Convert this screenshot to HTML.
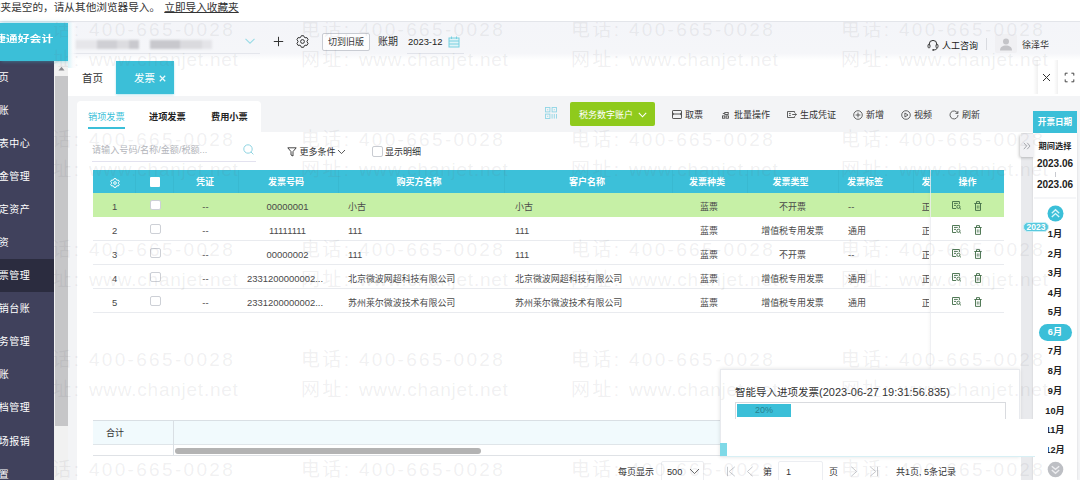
<!DOCTYPE html>
<html lang="zh-CN">
<head>
<meta charset="utf-8">
<title>发票</title>
<style>
*{box-sizing:border-box;margin:0;padding:0}
html,body{width:1080px;height:480px;overflow:hidden;background:#fff}
body{position:relative;font-family:"Liberation Sans","Noto Sans CJK SC",sans-serif;font-size:9px;color:#333;line-height:1}
.a{position:absolute;white-space:nowrap}
.wm{position:absolute;left:0;top:0;width:1080px;height:480px;overflow:hidden;pointer-events:none;z-index:50}
.wm span{position:absolute;white-space:nowrap;font-size:19px;letter-spacing:2.33px;color:rgba(110,110,120,0.10);line-height:22px}
.wm i{font-style:normal;letter-spacing:0.76px}
/* top strip */
#strip{left:0;top:0;width:1080px;height:22px;background:#fff;border-bottom:1px solid #e3e5ea}
/* header */
#hdr{left:0;top:22px;width:1080px;height:38px;background:linear-gradient(#f4f5f9 0%,#f5f6f9 82%,#fff 100%)}
#logo{left:0;top:23px;width:68px;height:38px;background:#3bbfd8;box-shadow:1px 0 4px rgba(59,191,216,.55);z-index:3;color:#fff;font-weight:bold;font-size:10px}
/* sidebar */
#side{left:0;top:61px;width:54px;height:419px;background:#40415c}
#side .it{position:absolute;left:0;width:54px;height:33px;color:#fff;font-size:10px;line-height:33px;white-space:nowrap}
#sscroll{left:54px;top:60px;width:14px;height:420px;background:#f1f1f1}
#sthumb{left:55px;top:76px;width:13px;height:350px;background:#c6c6c8}
/* tabs bar */
#tabbar{left:68px;top:60px;width:1012px;height:36px;background:#fff}
#page{left:68px;top:96px;width:1012px;height:384px;background:#f3f4f6}
#main{left:77px;top:132px;width:956px;height:348px;background:#fff}
#tcard{left:77px;top:101px;width:184px;height:34px;background:#fff;border-radius:4px 4px 0 0}
.th{position:absolute;top:170.5px;height:23px;line-height:23px;color:#fff;font-weight:bold;font-size:9px;text-align:center;white-space:nowrap}
.row{position:absolute;left:93px;width:911px;height:24px;border-bottom:1px solid #e6e8ec}
.c{position:absolute;white-space:nowrap;font-size:8.95px;color:#4a4a4a;line-height:24px;height:24px}
.n{font-size:9.45px}
.cb{position:absolute;width:10.5px;height:10.5px;border:1px solid #cdd0d6;border-radius:2px;background:#fff}
.mon{position:absolute;left:1033px;width:44px;text-align:center;font-size:9.2px;font-weight:bold;color:#222;line-height:12px}
</style>
</head>
<body>
<!-- top browser strip -->
<div class="a" id="strip"></div>
<div class="a" style="left:-10.15px;top:0px;font-size:10.65px;line-height:14px;color:#333">藏夹是空的，请从其他浏览器导入。 <span style="text-decoration:underline;text-underline-offset:1px;text-decoration-thickness:1px;margin-left:1.2px">立即导入收藏夹</span></div>

<!-- header -->
<div class="a" id="hdr"></div>
<div class="a" id="logo"><span class="a" style="left:-6px;top:11px;font-size:8.6px;line-height:10px;transform:scaleX(1.38);transform-origin:0 0">捷通好会计</span></div>

<!-- sidebar -->
<div class="a" id="side">
  <div class="it" style="top:-0.2px"><span style="margin-left:-1.2px;letter-spacing:.45px">页</span></div>
  <div class="it" style="top:32.9px"><span style="margin-left:-1.2px;letter-spacing:.45px">账</span></div>
  <div class="it" style="top:65.9px"><span style="margin-left:-1.2px;letter-spacing:.45px">表中心</span></div>
  <div class="it" style="top:99.0px"><span style="margin-left:-1.2px;letter-spacing:.45px">金管理</span></div>
  <div class="it" style="top:132.0px"><span style="margin-left:-1.2px;letter-spacing:.45px">定资产</span></div>
  <div class="it" style="top:165.1px"><span style="margin-left:-1.2px;letter-spacing:.45px">资</span></div>
  <div class="it" style="top:198.2px;background:#2b2c3f"><span style="margin-left:-1.2px;letter-spacing:.45px">票管理</span></div>
  <div class="it" style="top:231.2px"><span style="margin-left:-1.2px;letter-spacing:.45px">销台账</span></div>
  <div class="it" style="top:264.3px"><span style="margin-left:-1.2px;letter-spacing:.45px">务管理</span></div>
  <div class="it" style="top:297.3px"><span style="margin-left:-1.2px;letter-spacing:.45px">账</span></div>
  <div class="it" style="top:330.4px"><span style="margin-left:-1.2px;letter-spacing:.45px">档管理</span></div>
  <div class="it" style="top:363.5px"><span style="margin-left:-1.2px;letter-spacing:.45px">场报销</span></div>
  <div class="it" style="top:396.5px"><span style="margin-left:-1.2px;letter-spacing:.45px">置</span></div>
</div>
<div class="a" id="sscroll"></div>
<div class="a" id="sthumb"></div>
<svg class="a" style="left:58px;top:66px" width="7" height="5" viewBox="0 0 7 5"><path d="M0.5 4.5L3.5 0.8L6.5 4.5Z" fill="#8a8a8e"/></svg>

<!-- tab bar -->
<div class="a" id="tabbar"></div>
<div class="a" id="page"></div>
<div class="a" id="tcard"></div>
<div class="a" id="main"></div>

<!-- header contents -->
<div class="a" style="left:68px;top:53px;width:192px;height:1px;background:#e4e6ec"></div>
<div class="a" style="left:75px;top:39px;width:140px;height:12px;filter:blur(1.2px)">
  <div class="a" style="left:0;top:1px;width:22px;height:9px;background:#e6e6ea"></div>
  <div class="a" style="left:22px;top:1px;width:20px;height:9px;background:#cfcfd4"></div>
  <div class="a" style="left:42px;top:1px;width:12px;height:9px;background:#dcdce0"></div>
  <div class="a" style="left:54px;top:1px;width:10px;height:9px;background:#c9c9ce"></div>
  <div class="a" style="left:75px;top:1px;width:30px;height:9px;background:#c8c8cd"></div>
  <div class="a" style="left:105px;top:1px;width:22px;height:9px;background:#dadade"></div>
  <div class="a" style="left:127px;top:1px;width:10px;height:9px;background:#e4e4e8"></div>
</div>
<svg class="a" style="left:244px;top:37px" width="12" height="8" viewBox="0 0 12 8"><path d="M1.5 1.8 L6 6.2 L10.5 1.8" fill="none" stroke="#9adbe6" stroke-width="1.1"/></svg>
<svg class="a" style="left:273px;top:36px" width="11" height="11" viewBox="0 0 11 11"><path d="M5.5 0.8V10.2M0.8 5.5H10.2" fill="none" stroke="#333" stroke-width="1"/></svg>
<svg class="a" style="left:296px;top:35px" width="13" height="13" viewBox="0 0 13 13"><path d="M10.99 6.83 L12.09 8.40 L10.94 10.39 L9.03 10.22 L8.46 10.55 L7.65 12.29 L5.35 12.29 L4.54 10.55 L3.97 10.22 L2.06 10.39 L0.91 8.40 L2.01 6.83 L2.01 6.17 L0.91 4.60 L2.06 2.61 L3.97 2.78 L4.54 2.45 L5.35 0.71 L7.65 0.71 L8.46 2.45 L9.03 2.78 L10.94 2.61 L12.09 4.60 L10.99 6.17Z" fill="none" stroke="#333" stroke-width="1" stroke-linejoin="round"/><circle cx="6.5" cy="6.5" r="1.9" fill="none" stroke="#333" stroke-width="1"/></svg>
<div class="a" style="left:322px;top:33px;width:48px;height:18px;border:1px solid #c9ccd3;border-radius:2px;background:#fdfdfe;text-align:center;font-size:9px;line-height:16px;color:#333">切到旧版</div>
<div class="a" style="left:378px;top:36px;font-size:10px;line-height:12px;color:#333">账期</div>
<div class="a" style="left:408px;top:36px;font-size:9.4px;line-height:12px;color:#222">2023-12</div>
<svg class="a" style="left:448px;top:36px" width="12" height="12" viewBox="0 0 12 12"><rect x="1" y="2" width="10" height="9" fill="#dff4f8" stroke="#79d0e0" stroke-width="1"/><path d="M1 5H11M1 8H11M3.5 0.5V3M8.5 0.5V3" stroke="#79d0e0" stroke-width="1" fill="none"/></svg>
<div class="a" style="left:407px;top:53px;width:57px;height:1px;background:#e1e3ea"></div>
<!-- header right -->
<svg class="a" style="left:927px;top:39px" width="12" height="12" viewBox="0 0 12 12"><path d="M2.2 6.5V5.2a3.8 3.8 0 0 1 7.6 0V6.5" fill="none" stroke="#333" stroke-width="1"/><rect x="1" y="5.4" width="2" height="3.4" rx="0.8" fill="none" stroke="#333" stroke-width="0.9"/><rect x="9" y="5.4" width="2" height="3.4" rx="0.8" fill="none" stroke="#333" stroke-width="0.9"/><path d="M10 8.8c0 1.6-1.4 2.1-3.2 2.1" fill="none" stroke="#333" stroke-width="0.9"/><circle cx="6.2" cy="10.9" r="0.9" fill="#333"/></svg>
<div class="a" style="left:942px;top:40px;font-size:9px;line-height:12px;color:#222">人工咨询</div>
<div class="a" style="left:986px;top:38px;width:1px;height:12px;background:#d9dbe0"></div>
<div class="a" style="left:995px;top:34px;width:22px;height:19px;background:#f0f0f3;border-radius:2px"></div>
<svg class="a" style="left:999px;top:38px" width="14" height="13" viewBox="0 0 14 13"><circle cx="7" cy="3.6" r="3" fill="#c4c4c8"/><path d="M1 12.5c0-3.6 2.6-5 6-5s6 1.4 6 5z" fill="#c4c4c8"/></svg>
<div class="a" style="left:1022px;top:39px;font-size:9px;line-height:12px;color:#333">徐泽华</div>

<!-- tab bar contents -->
<div class="a" style="left:82px;top:71px;font-size:10.5px;line-height:14px;color:#333">首页</div>
<div class="a" style="left:116px;top:61px;width:58px;height:33px;background:#3bbfd8;box-shadow:0 1px 2px rgba(60,190,215,.4)"></div>
<div class="a" style="left:134px;top:71px;font-size:10.5px;line-height:14px;color:#fff">发票</div>
<svg class="a" style="left:159px;top:75px" width="7" height="7" viewBox="0 0 7 7"><path d="M0.8 0.8L6.2 6.2M6.2 0.8L0.8 6.2" stroke="#eefafc" stroke-width="1.25" fill="none"/></svg>
<div class="a" style="left:1033px;top:60px;width:5px;height:34px;background:linear-gradient(90deg,rgba(0,0,0,0),rgba(0,0,0,.06))"></div>
<div class="a" style="left:1054px;top:60px;width:4px;height:34px;background:linear-gradient(90deg,rgba(0,0,0,0),rgba(0,0,0,.06))"></div>
<svg class="a" style="left:1042px;top:73px" width="9" height="9" viewBox="0 0 9 9"><path d="M1 1L8 8M8 1L1 8" stroke="#333" stroke-width="1" fill="none"/></svg>
<svg class="a" style="left:1064px;top:72px" width="11" height="11" viewBox="0 0 11 11"><path d="M1.2 3.6V1.2H3.6M7.4 1.2H9.8V3.6M9.8 7.4V9.8H7.4M3.6 9.8H1.2V7.4" stroke="#444" stroke-width="1" fill="none"/></svg>


<!-- sub tabs -->
<div class="a" style="left:88px;top:111px;font-size:9.2px;line-height:12px;color:#3bbfd8">销项发票</div>
<div class="a" style="left:88px;top:127px;width:37px;height:2px;background:#3bbfd8"></div>
<div class="a" style="left:149px;top:111px;font-size:9.2px;line-height:12px;color:#222;font-weight:bold">进项发票</div>
<div class="a" style="left:211px;top:111px;font-size:9.2px;line-height:12px;color:#222;font-weight:bold">费用小票</div>

<!-- toolbar -->
<svg class="a" style="left:545px;top:107px" width="12" height="12" viewBox="0 0 12 12" fill="none" stroke="#8fd5e5" stroke-width="0.9"><rect x="0.5" y="0.5" width="4.4" height="4.4"/><rect x="7.1" y="0.5" width="4.4" height="4.4"/><rect x="0.5" y="7.1" width="4.4" height="4.4"/><path d="M7.1 7V11.6M9.3 7V11.6M11.5 7V11.6"/><path d="M2.2 2.7H3.2M8.8 2.7H9.8M2.2 9.3H3.2" stroke-width="1.1"/></svg>
<div class="a" style="left:570px;top:102px;width:85px;height:23.5px;background:#8fca1c;border-radius:2px"></div>
<div class="a" style="left:579px;top:108.5px;font-size:9px;line-height:12px;color:#fff">税务数字账户</div>
<svg class="a" style="left:637.5px;top:112px" width="9" height="6" viewBox="0 0 9 6"><path d="M0.8 0.9L4.5 4.8L8.2 0.9" fill="none" stroke="#fff" stroke-width="1.1"/></svg>

<svg class="a" style="left:672px;top:110px" width="10" height="9" viewBox="0 0 10 9" fill="none" stroke="#444" stroke-width="0.9"><rect x="0.5" y="0.5" width="9" height="8" rx="0.6"/><path d="M0.5 2.8c1.4 0 1.4 2.4 0 2.4M9.5 2.8c-1.4 0-1.4 2.4 0 2.4M1.6 4H8.4" /></svg>
<div class="a" style="left:685px;top:109px;font-size:9px;line-height:12px;color:#333">取票</div>
<svg class="a" style="left:722px;top:111.5px" width="7" height="7" viewBox="0 0 7 7" fill="none" stroke="#444" stroke-width="0.85"><rect x="2.8" y="0.5" width="3.4" height="2"/><rect x="0.5" y="3.9" width="2.3" height="2.3"/><rect x="4.1" y="3.9" width="2.3" height="2.3"/><path d="M0.8 1.5H2.6"/></svg>
<div class="a" style="left:734px;top:109px;font-size:9px;line-height:12px;color:#333">批量操作</div>
<svg class="a" style="left:787px;top:111px" width="10" height="7" viewBox="0 0 10 7" fill="none" stroke="#444" stroke-width="0.85"><path d="M7.6 1.8V0.5H0.5V6.5H7.6V5.2"/><path d="M2 2.4H3.8M2 4.4H3.8M5.2 3.5H9.4M8.2 2.3L9.4 3.5L8.2 4.7"/></svg>
<div class="a" style="left:800px;top:109px;font-size:9px;line-height:12px;color:#333">生成凭证</div>
<svg class="a" style="left:853px;top:110px" width="10" height="10" viewBox="0 0 10 10" fill="none" stroke="#4a4a4a" stroke-width="0.85"><circle cx="5" cy="5" r="4.3"/><path d="M5 2.6V7.4M2.6 5H7.4"/></svg>
<div class="a" style="left:866px;top:109px;font-size:9px;line-height:12px;color:#333">新增</div>
<svg class="a" style="left:901px;top:110px" width="10" height="10" viewBox="0 0 10 10" fill="none" stroke="#4a4a4a" stroke-width="0.85"><circle cx="5" cy="5" r="4.3"/><path d="M3.9 3V7L7 5Z"/></svg>
<div class="a" style="left:914px;top:109px;font-size:9px;line-height:12px;color:#333">视频</div>
<svg class="a" style="left:949px;top:110px" width="10" height="10" viewBox="0 0 10 10" fill="none" stroke="#4a4a4a" stroke-width="0.85"><path d="M8.6 3.2A4 4 0 1 0 9 5"/><path d="M8.9 1V3.4H6.5" /></svg>
<div class="a" style="left:962px;top:109px;font-size:9px;line-height:12px;color:#333">刷新</div>

<!-- search row -->
<div class="a" style="left:92px;top:144px;font-size:9.1px;line-height:12px;color:#b3b5bb">请输入号码/名称/金额/税额...</div>
<svg class="a" style="left:243px;top:144px" width="11" height="11" viewBox="0 0 11 11" fill="none" stroke="#8fd4e2" stroke-width="1"><circle cx="5" cy="5" r="4.2"/><path d="M8 8L10.4 10.4"/></svg>
<div class="a" style="left:92px;top:161px;width:164px;height:1px;background:#e3e2ef"></div>
<svg class="a" style="left:287px;top:147px" width="10" height="10" viewBox="0 0 10 10" fill="none" stroke="#333" stroke-width="0.9"><path d="M0.8 0.8H9.2L6 4.6V9L4 8V4.6Z"/></svg>
<div class="a" style="left:299.5px;top:146px;font-size:9px;line-height:12px;color:#333">更多条件</div>
<svg class="a" style="left:337px;top:149px" width="9" height="6" viewBox="0 0 9 6"><path d="M1 1L4.5 4.6L8 1" fill="none" stroke="#444" stroke-width="0.9"/></svg>
<div class="cb" style="left:372px;top:146px;border-color:#c9ccd2"></div>
<div class="a" style="left:385px;top:146px;font-size:9px;line-height:12px;color:#333">显示明细</div>


<!-- table -->
<div class="a" style="left:93px;top:170px;width:911px;height:23px;background:#3cc0d9"></div>
<div class="a" style="left:135px;top:170px;width:1px;height:23px;background:#39b9d1"></div>
<div class="a" style="left:173px;top:170px;width:1px;height:23px;background:#39b9d1"></div>
<div class="a" style="left:238px;top:170px;width:1px;height:23px;background:#39b9d1"></div>
<div class="a" style="left:338px;top:170px;width:1px;height:23px;background:#39b9d1"></div>
<div class="a" style="left:504px;top:170px;width:1px;height:23px;background:#39b9d1"></div>
<div class="a" style="left:672px;top:170px;width:1px;height:23px;background:#39b9d1"></div>
<div class="a" style="left:747px;top:170px;width:1px;height:23px;background:#39b9d1"></div>
<div class="a" style="left:838px;top:170px;width:1px;height:23px;background:#39b9d1"></div>
<div class="a" style="left:913px;top:170px;width:1px;height:23px;background:#39b9d1"></div>
<svg class="a" style="left:109.5px;top:177.5px" width="10" height="10" viewBox="0 0 10 10" fill="none" stroke="#fff" stroke-width="1"><path d="M8.39 5.25 L9.26 6.45 L8.38 7.97 L6.91 7.81 L6.48 8.06 L5.88 9.41 L4.12 9.41 L3.52 8.06 L3.09 7.81 L1.62 7.97 L0.74 6.45 L1.61 5.25 L1.61 4.75 L0.74 3.55 L1.62 2.03 L3.09 2.19 L3.52 1.94 L4.12 0.59 L5.88 0.59 L6.48 1.94 L6.91 2.19 L8.38 2.03 L9.26 3.55 L8.39 4.75Z" stroke-linejoin="round"/><circle cx="5" cy="5" r="1.3"/></svg>
<div class="a" style="left:150px;top:177px;width:10px;height:10px;background:#fff;border-radius:1px"></div>
<div class="th" style="left:165px;width:80px">凭证</div>
<div class="th" style="left:246px;width:80px">发票号码</div>
<div class="th" style="left:379px;width:80px">购买方名称</div>
<div class="th" style="left:547px;width:80px">客户名称</div>
<div class="th" style="left:667px;width:80px">发票种类</div>
<div class="th" style="left:750.5px;width:80px">发票类型</div>
<div class="th" style="left:825px;width:80px">发票标签</div>
<div class="th" style="left:921.5px;width:9px;overflow:hidden;text-align:left">发票</div>
<div class="row" style="top:193px;background:#c6f0a6;border-bottom-color:#c6f0a6">
<span class="c n" style="left:-38.5px;width:120px;text-align:center;top:1.5px">1</span>
<span class="cb" style="left:57px;top:6.5px"></span>
<span class="c n" style="left:52.5px;width:120px;text-align:center;top:1.5px">--</span>
<span class="c n" style="left:134.5px;width:120px;text-align:center;top:1.5px">00000001</span>
<span class="c" style="left:255px;top:1.5px">小古</span>
<span class="c" style="left:422px;top:1.5px">小古</span>
<span class="c" style="left:556.0px;width:120px;text-align:center;top:1.5px">蓝票</span>
<span class="c" style="left:639.5px;width:120px;text-align:center;top:1.5px">不开票</span>
<span class="c n" style="left:755px;top:1.5px">--</span>
<span class="c" style="left:828.8px;width:7.7px;overflow:hidden;top:1.5px">正常</span>
</div>
<div class="row" style="top:217px;background:transparent;border-bottom-color:#e9ebef">
<span class="c n" style="left:-38.5px;width:120px;text-align:center;top:1.5px">2</span>
<span class="cb" style="left:57px;top:6.5px"></span>
<span class="c n" style="left:52.5px;width:120px;text-align:center;top:1.5px">--</span>
<span class="c n" style="left:134.5px;width:120px;text-align:center;top:1.5px">11111111</span>
<span class="c n" style="left:255px;top:1.5px">111</span>
<span class="c n" style="left:422px;top:1.5px">111</span>
<span class="c" style="left:556.0px;width:120px;text-align:center;top:1.5px">蓝票</span>
<span class="c" style="left:639.5px;width:120px;text-align:center;top:1.5px">增值税专用发票</span>
<span class="c" style="left:755px;top:1.5px">通用</span>
<span class="c" style="left:828.8px;width:7.7px;overflow:hidden;top:1.5px">正常</span>
</div>
<div class="row" style="top:241px;background:transparent;border-bottom-color:#e9ebef">
<span class="c n" style="left:-38.5px;width:120px;text-align:center;top:1.5px">3</span>
<span class="cb" style="left:57px;top:6.5px"></span>
<span class="c n" style="left:52.5px;width:120px;text-align:center;top:1.5px">--</span>
<span class="c n" style="left:134.5px;width:120px;text-align:center;top:1.5px">00000002</span>
<span class="c n" style="left:255px;top:1.5px">111</span>
<span class="c n" style="left:422px;top:1.5px">111</span>
<span class="c" style="left:556.0px;width:120px;text-align:center;top:1.5px">蓝票</span>
<span class="c" style="left:639.5px;width:120px;text-align:center;top:1.5px">不开票</span>
<span class="c n" style="left:755px;top:1.5px">--</span>
<span class="c" style="left:828.8px;width:7.7px;overflow:hidden;top:1.5px">正常</span>
</div>
<div class="row" style="top:265px;background:transparent;border-bottom-color:#e9ebef">
<span class="c n" style="left:-38.5px;width:120px;text-align:center;top:1.5px">4</span>
<span class="cb" style="left:57px;top:6.5px"></span>
<span class="c n" style="left:52.5px;width:120px;text-align:center;top:1.5px">--</span>
<span class="c n" style="left:132.0px;width:120px;text-align:center;top:1.5px">2331200000002...</span>
<span class="c" style="left:255px;top:1.5px">北京微波网超科技有限公司</span>
<span class="c" style="left:422px;top:1.5px">北京微波网超科技有限公司</span>
<span class="c" style="left:556.0px;width:120px;text-align:center;top:1.5px">蓝票</span>
<span class="c" style="left:639.5px;width:120px;text-align:center;top:1.5px">增值税专用发票</span>
<span class="c" style="left:755px;top:1.5px">通用</span>
<span class="c" style="left:828.8px;width:7.7px;overflow:hidden;top:1.5px">正常</span>
</div>
<div class="row" style="top:289px;background:transparent;border-bottom-color:#e9ebef">
<span class="c n" style="left:-38.5px;width:120px;text-align:center;top:1.5px">5</span>
<span class="cb" style="left:57px;top:6.5px"></span>
<span class="c n" style="left:52.5px;width:120px;text-align:center;top:1.5px">--</span>
<span class="c n" style="left:132.0px;width:120px;text-align:center;top:1.5px">2331200000002...</span>
<span class="c" style="left:255px;top:1.5px">苏州莱尔微波技术有限公司</span>
<span class="c" style="left:422px;top:1.5px">苏州莱尔微波技术有限公司</span>
<span class="c" style="left:556.0px;width:120px;text-align:center;top:1.5px">蓝票</span>
<span class="c" style="left:639.5px;width:120px;text-align:center;top:1.5px">增值税专用发票</span>
<span class="c" style="left:755px;top:1.5px">通用</span>
<span class="c" style="left:828.8px;width:7.7px;overflow:hidden;top:1.5px">正常</span>
</div>
<div class="a" style="left:927px;top:170px;width:4px;height:250px;background:linear-gradient(90deg,rgba(0,0,0,0),rgba(0,0,0,.035))"></div>
<div class="a" style="left:929.5px;top:170px;width:1.5px;height:199px;background:rgba(236,238,241,.8);z-index:2"></div>
<div class="a" style="left:931px;top:170px;width:73px;height:23px;background:#3cc0d9"></div>
<div class="th" style="left:931px;width:73px">操作</div>
<div class="a" style="left:931px;top:193px;width:73px;height:24px;background:#c6f0a6;border-bottom:1px solid #c6f0a6"><svg class="a" style="left:21px;top:8px" width="10" height="9" viewBox="0 0 10 9" fill="none" stroke="#3f6b45" stroke-width="0.9"><path d="M7.4 3.2V0.5H0.5V7.5H4.2"/><path d="M2 2.4H5.8M2 4.4H4"/><circle cx="6.4" cy="5.8" r="1.6"/><path d="M7.6 7L9 8.4"/></svg><svg class="a" style="left:43px;top:8px" width="8" height="10" viewBox="0 0 8 10" fill="none" stroke="#3f6b45" stroke-width="0.9"><path d="M0.3 2.5H7.7M2.5 2.4V0.6H5.5V2.4M1.5 2.6V9.4H6.5V2.6" /><path d="M3.3 4.4V7.6M4.9 4.4V7.6" stroke-width="0.7"/></svg></div>
<div class="a" style="left:931px;top:217px;width:73px;height:24px;background:#fff;border-bottom:1px solid #e9ebef"><svg class="a" style="left:21px;top:8px" width="10" height="9" viewBox="0 0 10 9" fill="none" stroke="#3f6b45" stroke-width="0.9"><path d="M7.4 3.2V0.5H0.5V7.5H4.2"/><path d="M2 2.4H5.8M2 4.4H4"/><circle cx="6.4" cy="5.8" r="1.6"/><path d="M7.6 7L9 8.4"/></svg><svg class="a" style="left:43px;top:8px" width="8" height="10" viewBox="0 0 8 10" fill="none" stroke="#3f6b45" stroke-width="0.9"><path d="M0.3 2.5H7.7M2.5 2.4V0.6H5.5V2.4M1.5 2.6V9.4H6.5V2.6" /><path d="M3.3 4.4V7.6M4.9 4.4V7.6" stroke-width="0.7"/></svg></div>
<div class="a" style="left:931px;top:241px;width:73px;height:24px;background:#fff;border-bottom:1px solid #e9ebef"><svg class="a" style="left:21px;top:8px" width="10" height="9" viewBox="0 0 10 9" fill="none" stroke="#3f6b45" stroke-width="0.9"><path d="M7.4 3.2V0.5H0.5V7.5H4.2"/><path d="M2 2.4H5.8M2 4.4H4"/><circle cx="6.4" cy="5.8" r="1.6"/><path d="M7.6 7L9 8.4"/></svg><svg class="a" style="left:43px;top:8px" width="8" height="10" viewBox="0 0 8 10" fill="none" stroke="#3f6b45" stroke-width="0.9"><path d="M0.3 2.5H7.7M2.5 2.4V0.6H5.5V2.4M1.5 2.6V9.4H6.5V2.6" /><path d="M3.3 4.4V7.6M4.9 4.4V7.6" stroke-width="0.7"/></svg></div>
<div class="a" style="left:931px;top:265px;width:73px;height:24px;background:#fff;border-bottom:1px solid #e9ebef"><svg class="a" style="left:21px;top:8px" width="10" height="9" viewBox="0 0 10 9" fill="none" stroke="#3f6b45" stroke-width="0.9"><path d="M7.4 3.2V0.5H0.5V7.5H4.2"/><path d="M2 2.4H5.8M2 4.4H4"/><circle cx="6.4" cy="5.8" r="1.6"/><path d="M7.6 7L9 8.4"/></svg><svg class="a" style="left:43px;top:8px" width="8" height="10" viewBox="0 0 8 10" fill="none" stroke="#3f6b45" stroke-width="0.9"><path d="M0.3 2.5H7.7M2.5 2.4V0.6H5.5V2.4M1.5 2.6V9.4H6.5V2.6" /><path d="M3.3 4.4V7.6M4.9 4.4V7.6" stroke-width="0.7"/></svg></div>
<div class="a" style="left:931px;top:289px;width:73px;height:24px;background:#fff;border-bottom:1px solid #e9ebef"><svg class="a" style="left:21px;top:8px" width="10" height="9" viewBox="0 0 10 9" fill="none" stroke="#3f6b45" stroke-width="0.9"><path d="M7.4 3.2V0.5H0.5V7.5H4.2"/><path d="M2 2.4H5.8M2 4.4H4"/><circle cx="6.4" cy="5.8" r="1.6"/><path d="M7.6 7L9 8.4"/></svg><svg class="a" style="left:43px;top:8px" width="8" height="10" viewBox="0 0 8 10" fill="none" stroke="#3f6b45" stroke-width="0.9"><path d="M0.3 2.5H7.7M2.5 2.4V0.6H5.5V2.4M1.5 2.6V9.4H6.5V2.6" /><path d="M3.3 4.4V7.6M4.9 4.4V7.6" stroke-width="0.7"/></svg></div>
<div class="a" style="left:93px;top:420px;width:911px;height:25px;background:#f1fafd;border-top:1px solid #d9dfe4;border-bottom:1px solid #dfe5e9"></div>
<div class="a" style="left:173px;top:420px;width:1px;height:35px;background:#d9dfe4"></div>
<div class="a" style="left:106px;top:427px;font-size:9px;line-height:12px;color:#333">合计</div>
<div class="a" style="left:175px;top:448px;width:306px;height:6px;border-radius:3px;background:#b3b3b3"></div>
<div class="a" style="left:93px;top:455px;width:911px;height:1px;background:#dfe2e6"></div>

<!-- pagination -->
<div class="a" style="left:618px;top:466px;font-size:9px;line-height:12px;color:#333">每页显示</div>
<div class="a" style="left:661px;top:461px;width:43px;height:22px;background:#fff;border:1px solid #eceef2;border-radius:2px"></div>
<div class="a" style="left:667px;top:466px;font-size:9.2px;line-height:12px;color:#333">500</div>
<svg class="a" style="left:689px;top:468px" width="11" height="7" viewBox="0 0 11 7"><path d="M1 1L5.5 5.6L10 1" fill="none" stroke="#555" stroke-width="0.9"/></svg>
<svg class="a" style="left:726px;top:466px" width="10" height="11" viewBox="0 0 10 11" fill="none" stroke="#c6c8cd" stroke-width="1"><path d="M1.5 0.8V10.2M8.8 0.8L3.2 5.5L8.8 10.2"/></svg>
<svg class="a" style="left:746px;top:466px" width="8" height="11" viewBox="0 0 8 11" fill="none" stroke="#c6c8cd" stroke-width="1"><path d="M6.6 0.8L1.4 5.5L6.6 10.2"/></svg>
<div class="a" style="left:763px;top:466px;font-size:9px;line-height:12px;color:#333">第</div>
<div class="a" style="left:778px;top:461px;width:45px;height:22px;background:#fff;border:1px solid #eceef2;border-radius:2px"></div>
<div class="a" style="left:786px;top:466px;font-size:9.2px;line-height:12px;color:#333">1</div>
<div class="a" style="left:829px;top:466px;font-size:9px;line-height:12px;color:#333">页</div>
<svg class="a" style="left:850px;top:466px" width="8" height="11" viewBox="0 0 8 11" fill="none" stroke="#c6c8cd" stroke-width="1"><path d="M1.4 0.8L6.6 5.5L1.4 10.2"/></svg>
<svg class="a" style="left:869px;top:466px" width="10" height="11" viewBox="0 0 10 11" fill="none" stroke="#c6c8cd" stroke-width="1"><path d="M8.5 0.8V10.2M1.2 0.8L6.8 5.5L1.2 10.2"/></svg>
<div class="a" style="left:896px;top:466px;font-size:9px;line-height:12px;color:#333">共1页, 5条记录</div>
<!-- right strip + date panel -->
<div class="a" style="left:1021px;top:133px;width:12px;height:347px;background:#e9eaed"></div>
<div class="a" style="left:1033px;top:133px;width:44px;height:347px;background:#fff;box-shadow:0 0 2px rgba(0,0,0,.12)"></div>
<div class="a" style="left:1033px;top:111px;width:44px;height:22px;background:#3bbfd8;color:#fff;font-weight:bold;font-size:8.6px;line-height:22px;text-align:center">开票日期</div>
<div class="a" style="left:1020px;top:134px;width:14px;height:23px;background:#f1f1f4;border-radius:2px 0 0 2px;box-shadow:-1px 1px 3px rgba(0,0,0,.22)"></div>
<svg class="a" style="left:1023px;top:142px" width="8" height="8" viewBox="0 0 8 8" fill="none" stroke="#a6a8ae" stroke-width="1"><path d="M0.8 0.8L3.6 4L0.8 7.2M4.2 0.8L7 4L4.2 7.2"/></svg>
<div class="a" style="left:1033px;top:141px;width:44px;text-align:center;font-size:8.2px;line-height:12px;font-weight:bold;color:#222">期间选择</div>
<div class="a" style="left:1033px;top:158px;width:44px;text-align:center;font-size:10px;line-height:12px;font-weight:bold;color:#222">2023.06</div>
<div class="a" style="left:1055px;top:172px;width:1px;height:5px;background:#c8cad0"></div>
<div class="a" style="left:1033px;top:179px;width:44px;text-align:center;font-size:10px;line-height:12px;font-weight:bold;color:#222">2023.06</div>
<div class="a" style="left:1034px;top:197px;width:42px;height:2px;background:#f5f6f8"></div>
<svg class="a" style="left:1047px;top:205px" width="17" height="17" viewBox="0 0 17 17"><circle cx="8.5" cy="8.5" r="8" fill="#3bbfd8"/><path d="M4.8 8.2L8.5 4.8L12.2 8.2M4.8 12L8.5 8.6L12.2 12" fill="none" stroke="#d9f5fa" stroke-width="1.4"/></svg>
<div class="a" style="left:1023px;top:222px;width:26px;height:10px;border-radius:5px;background:#58c9de;border:1px solid #c8eef5;color:#fff;font-weight:bold;font-size:8.5px;line-height:8px;text-align:center">2023</div>
<div class="mon" style="top:227.5px">1月</div>
<div class="mon" style="top:247.5px">2月</div>
<div class="mon" style="top:267px">3月</div>
<div class="mon" style="top:286.5px">4月</div>
<div class="mon" style="top:306px">5月</div>
<div class="a" style="left:1039px;top:324px;width:33px;height:17px;border-radius:9px;background:#3bbfd8"></div>
<div class="mon" style="top:326px;color:#fff">6月</div>
<div class="mon" style="top:345px">7月</div>
<div class="mon" style="top:365px">8月</div>
<div class="mon" style="top:384.5px">9月</div>
<div class="mon" style="top:404.5px">10月</div>
<div class="mon" style="top:424px">11月</div>
<div class="mon" style="top:443.5px">12月</div>
<svg class="a" style="left:1047px;top:461px" width="17" height="17" viewBox="0 0 17 17"><circle cx="8.5" cy="8.5" r="7.8" fill="#bdbfc4"/><path d="M4.8 5.2L8.5 8.4L12.2 5.2M4.8 9L8.5 12.2L12.2 9" fill="none" stroke="#ededf0" stroke-width="1.4"/></svg>
<!-- popup -->
<div class="a" style="left:720px;top:369px;width:300px;height:88px;background:#fff;border:1px solid #e8eaee;box-shadow:0 0 4px rgba(0,0,0,.12)"></div>
<div class="a" style="left:720px;top:443px;width:7px;height:13px;background:#7fd9e7"></div>
<div class="a" style="left:735px;top:385px;font-size:11px;line-height:14px;color:#333"><span style="font-size:10.5px">智能导入进项发票</span>(2023-06-27 19:31:56.835)</div>
<div class="a" style="left:735px;top:402px;width:271px;height:20px;border:1px solid #d9dbdf;background:#fff"></div>
<div class="a" style="left:737px;top:404px;width:54px;height:13px;background:#3bbfd8;color:#27818f;font-size:9px;line-height:13px;text-align:center">20%</div>
<!-- redaction box -->
<div class="a" style="left:727px;top:419px;width:321px;height:37px;background:#fff"></div>
<div class="a" style="left:727px;top:456px;width:308px;height:1px;background:#d8f0f5"></div>

<div class="a" style="left:68px;top:23px;width:9px;height:45px;background:linear-gradient(90deg,rgba(214,244,249,.95),rgba(250,251,253,.9) 55%,rgba(250,251,253,0));z-index:60"></div>
<!-- watermark -->
<div class="wm" style="left:54px;top:22px;width:1026px;height:458px">
<span style="left:-23px;top:-3px">电话: 400-665-0028</span>
<span style="left:-23px;top:27px">网址: <i>www.chanjet.net</i></span>
<span style="left:-23px;top:107px">电话: 400-665-0028</span>
<span style="left:-23px;top:137px">网址: <i>www.chanjet.net</i></span>
<span style="left:-23px;top:217px">电话: 400-665-0028</span>
<span style="left:-23px;top:247px">网址: <i>www.chanjet.net</i></span>
<span style="left:-23px;top:327px">电话: 400-665-0028</span>
<span style="left:-23px;top:357px">网址: <i>www.chanjet.net</i></span>
<span style="left:-23px;top:437px">电话: 400-665-0028</span>
<span style="left:247px;top:-3px">电话: 400-665-0028</span>
<span style="left:247px;top:27px">网址: <i>www.chanjet.net</i></span>
<span style="left:247px;top:107px">电话: 400-665-0028</span>
<span style="left:247px;top:137px">网址: <i>www.chanjet.net</i></span>
<span style="left:247px;top:217px">电话: 400-665-0028</span>
<span style="left:247px;top:247px">网址: <i>www.chanjet.net</i></span>
<span style="left:247px;top:327px">电话: 400-665-0028</span>
<span style="left:247px;top:357px">网址: <i>www.chanjet.net</i></span>
<span style="left:247px;top:437px">电话: 400-665-0028</span>
<span style="left:517px;top:-3px">电话: 400-665-0028</span>
<span style="left:517px;top:27px">网址: <i>www.chanjet.net</i></span>
<span style="left:517px;top:107px">电话: 400-665-0028</span>
<span style="left:517px;top:137px">网址: <i>www.chanjet.net</i></span>
<span style="left:517px;top:217px">电话: 400-665-0028</span>
<span style="left:517px;top:247px">网址: <i>www.chanjet.net</i></span>
<span style="left:517px;top:327px">电话: 400-665-0028</span>
<span style="left:517px;top:357px">网址: <i>www.chanjet.net</i></span>
<span style="left:517px;top:437px">电话: 400-665-0028</span>
<span style="left:787px;top:-3px">电话: 400-665-0028</span>
<span style="left:787px;top:27px">网址: <i>www.chanjet.net</i></span>
<span style="left:787px;top:107px">电话: 400-665-0028</span>
<span style="left:787px;top:137px">网址: <i>www.chanjet.net</i></span>
<span style="left:787px;top:217px">电话: 400-665-0028</span>
<span style="left:787px;top:247px">网址: <i>www.chanjet.net</i></span>
<span style="left:787px;top:327px">电话: 400-665-0028</span>
<span style="left:787px;top:357px">网址: <i>www.chanjet.net</i></span>
<span style="left:787px;top:437px">电话: 400-665-0028</span>
</div>
</body>
</html>
